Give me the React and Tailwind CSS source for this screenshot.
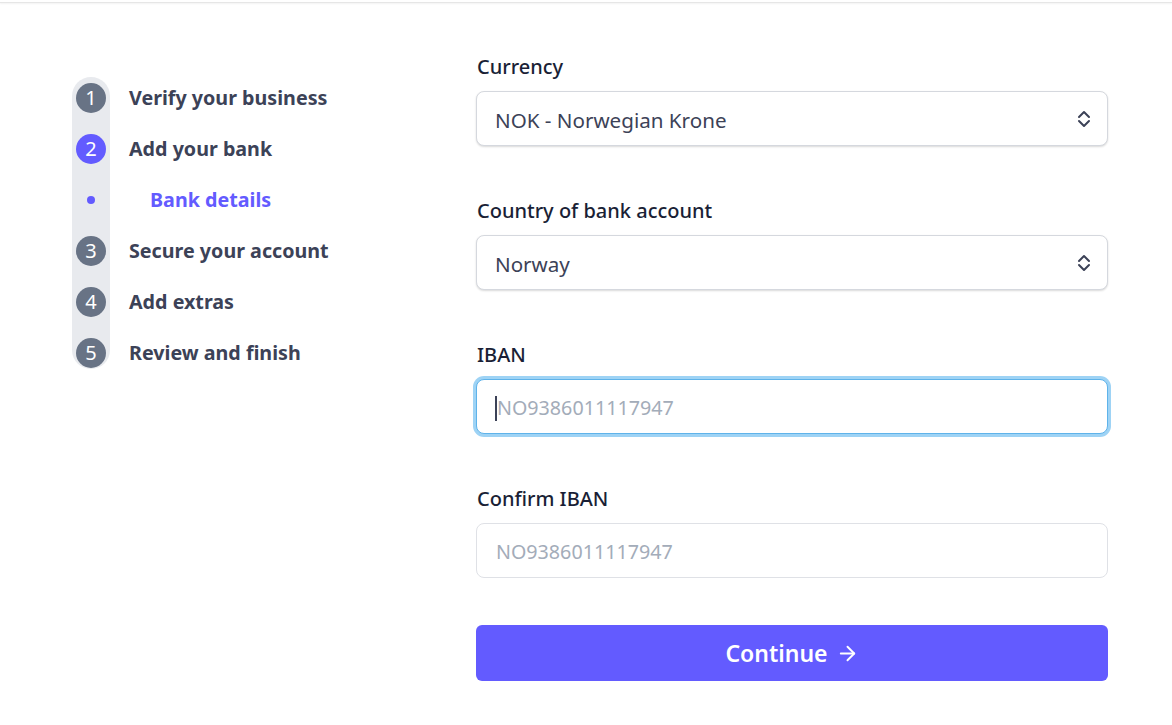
import { ArrowRight } from "lucide-react"

const steps = [
    { n: 1, label: "Verify your business" },
    { n: 2, label: "Add your bank", active: true },
    { sub: true, label: "Bank details" },
    { n: 3, label: "Secure your account" },
    { n: 4, label: "Add extras" },
    { n: 5, label: "Review and finish" },
]

function Stepper() {
    return (
        <div className="relative">
            {/* grey track behind the numbers */}
            <div className="absolute left-0 top-[5px] bottom-[9px] w-[38px] rounded-full bg-[#e8eaee]" />
            <div className="relative flex flex-col">
                {steps.map((s, i) => (
                    <div key={i} className="flex items-center h-[51px]">
                        <div className="w-[38px] flex justify-center">
                            {s.sub ? (
                                <span className="w-[8px] h-[8px] rounded-full bg-[#635bff]" />
                            ) : (
                                <span className={`w-[30px] h-[30px] rounded-full flex items-center justify-center text-white text-[20px] ${s.active ? 'bg-[#635bff]' : 'bg-[#687385]'}`}>
                                    {s.n}
                                </span>
                            )}
                        </div>
                        <span className={`text-[19.7px] font-bold ${s.sub ? 'ml-[40px] text-[#635bff]' : 'ml-[19px] text-[#3c4257]'}`}>
                            {s.label}
                        </span>
                    </div>
                ))}
            </div>
        </div>
    )
}

function UpDown() {
    return (
        <svg width="14" height="18" viewBox="0 0 14 18" fill="none" stroke="#3c4257" strokeWidth="2" strokeLinecap="round" strokeLinejoin="round">
            <path d="M2 7 L7 2 L12 7" />
            <path d="M2 11 L7 16 L12 11" />
        </svg>
    )
}

function SelectField({ label, value }) {
    return (
        <div className="flex flex-col">
            <label className="text-[20px] leading-[24px] font-medium text-[#1a1f36] mb-3 pl-[1px]">{label}</label>
            <div className="h-[55px] rounded-lg border border-[#d5d8de] bg-white shadow-[0_1px_2px_rgba(0,0,0,0.15)] flex items-center justify-between pl-[18px] pr-[16px]">
                <span className="text-[20.6px] text-[#3c4257] pt-[3px]">{value}</span>
                <UpDown />
            </div>
        </div>
    )
}

export default function App() {
    return (
        <div className="min-h-screen bg-white" style={{ fontFamily: '"Noto Sans", "Open Sans", sans-serif' }}>
            <div className="h-[3px] border-b border-[#e6e6e6] shadow-[0_1px_2px_rgba(0,0,0,0.05)]" />

            <div className="flex pl-[72px]">
                <div className="w-[404px] pt-[69px]">
                    <Stepper />
                </div>

                <div className="w-[632px] pt-[52px] flex flex-col gap-[53px]">
                    <SelectField label="Currency" value="NOK - Norwegian Krone" />
                    <SelectField label="Country of bank account" value="Norway" />

                    <div className="flex flex-col">
                        <label className="text-[20px] leading-[24px] font-medium text-[#1a1f36] mb-3 pl-[1px]">IBAN</label>
                        <div className="relative h-[55px] rounded-lg border border-[#5fb3ea] ring-[3px] ring-[#9ed3f5] bg-white flex items-center">
                            <input
                                className="w-full h-full bg-transparent pl-[20px] pt-[2px] text-[19.7px] outline-none placeholder:text-[#a3acb9]"
                                placeholder="NO9386011117947"
                            />
                            <span className="absolute left-[18px] top-[16px] w-[2px] h-[25px] bg-[#3c4257]" />
                        </div>
                    </div>

                    <div className="flex flex-col">
                        <label className="text-[20px] leading-[24px] font-medium text-[#1a1f36] mb-3 pl-[1px]">Confirm IBAN</label>
                        <input
                            className="h-[55px] rounded-lg border border-[#dfe1e6] bg-white pl-[19px] pt-[2px] text-[19.7px] outline-none placeholder:text-[#a3acb9]"
                            placeholder="NO9386011117947"
                        />
                    </div>

                    <button className="-mt-[6px] h-[56px] rounded-md bg-[#635bff] text-white text-[23px] font-semibold flex items-center justify-center gap-2">
                        Continue
                        <ArrowRight size={23} strokeWidth={2} />
                    </button>
                </div>
            </div>
        </div>
    )
}
